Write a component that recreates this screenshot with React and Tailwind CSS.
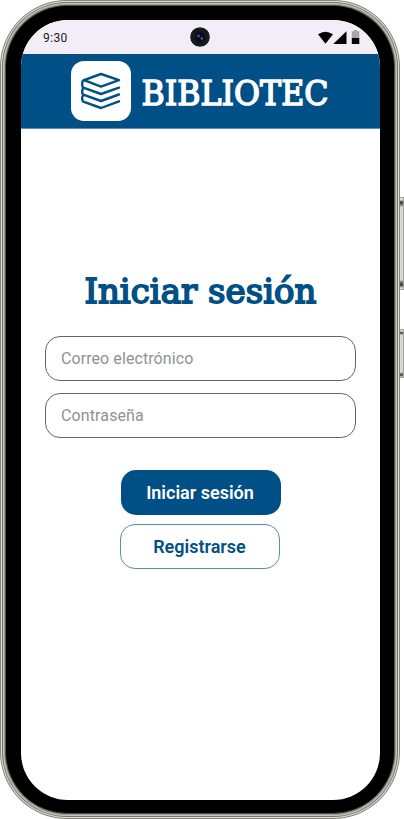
import React from "react";

const slab = "font-['Roboto_Slab','DejaVu_Serif',serif]";

function StatusBar() {
  return (
    <div className="relative flex h-[34px] shrink-0 items-center justify-between bg-[#f3edf7] pl-[22px] pr-[20px] text-[#1d1b20]">
      <span className="mt-px text-[12px] leading-4 tracking-[0.4px]">9:30</span>
      <svg className="absolute left-[169px] top-[7px]" width="20" height="20" viewBox="0 0 20 20">
        <circle cx="10" cy="10" r="9.8" fill="#17181c" />
        <circle cx="10" cy="10" r="5" fill="#080b18" />
        <circle cx="8.5" cy="8.8" r="1.6" fill="#4b4288" />
        <circle cx="11.8" cy="11.5" r="1.2" fill="#426da4" />
      </svg>
      <svg className="mt-px" width="42" height="16" viewBox="0 0 42 16" fill="#000">
        <path d="M0 4.3Q7.5-.8 15 4.3L7.5 13.7Z" />
        <path d="M28.5 1.3V14H15.2Z" />
        <path d="M36 0h3.2v1.2h2.1V8h-7.5V1.2H36Z" fill="#aaa4ad" />
        <path d="M33.8 8h7.5v6h-7.5Z" />
      </svg>
    </div>
  );
}

function Logo() {
  return (
    <div className="flex size-[60px] shrink-0 items-center justify-center rounded-[13px] bg-white">
      <svg width="40" height="38" viewBox="0 0 40 38" fill="none" stroke="#004f86" strokeWidth="2.4" strokeLinecap="round" strokeLinejoin="round">
        <path d="M20 2 38 8.2 20 14.6 3 8.2Z" />
        <path d="M3 8.2Q1.2 9 1.2 11V13.4Q1.2 15 3 15.8L20 22 38 15.7" />
        <path d="M2.6 16.2Q1.2 17 1.2 18.6V20.4Q1.2 22 3 22.8L20 29 38 22.5" />
        <path d="M2.6 23.2Q1.2 24 1.2 25.6V27.4Q1.2 29 3 29.8L20 36 38 29.3" />
      </svg>
    </div>
  );
}

export default function App() {
  return (
    <div className="relative h-[819px] w-[404px] overflow-hidden bg-white font-[Roboto,sans-serif]">
      <div className="absolute left-[399px] top-[197px] h-[93px] w-[5px] border border-[#a3a4a0] bg-[linear-gradient(to_bottom,#ddd_0_2px,#333_4px,#777_7px,#d6d7d2_9px,#d6d7d2_82px,#777_84px,#333_87px,#ddd_90px)]" />
      <div className="absolute left-[399px] top-[329px] h-[49px] w-[5px] border border-[#a3a4a0] bg-[linear-gradient(to_bottom,#ddd_0_1px,#333_3px,#d6d7d2_5px,#d6d7d2_42px,#333_45px,#ddd_47px)]" />
      <div className="relative h-[819px] w-[400px] rounded-[67px] bg-[#85857e] p-px">
        <div className="h-full rounded-[66px] bg-[#deded8] p-px">
          <div className="h-full rounded-[65px] bg-[#777770] p-px">
            <div className="h-full rounded-[64px] bg-[#c5c5bc] p-px">
              <div className="h-full rounded-[63px] bg-[#a09f96] p-px">
                <div className="h-full rounded-[62px] bg-[#50504c] p-px">
                  <div className="h-full rounded-[61px] bg-black pb-[13px] pl-[15px] pr-[14px] pt-[14px]">
                    <main className="flex h-full flex-col overflow-hidden rounded-[47px] bg-white">
                      <StatusBar />
                      <header className="flex h-[75px] shrink-0 items-center gap-[9px] border-b border-[#5c8db0] bg-[#004f86] pl-[50px]">
                        <Logo />
                        <svg className={`overflow-visible ${slab}`} width="191" height="54" viewBox="0 0 191 54">
                          <text x="1.5" y="41.3" fill="white" stroke="white" strokeWidth="1.5" fontSize="34" fontWeight="400" textLength="187" lengthAdjust="spacingAndGlyphs">BIBLIOTEC</text>
                        </svg>
                      </header>
                      <svg className={`ml-[62px] mt-[138px] h-[50px] w-[236px] shrink-0 overflow-visible ${slab}`} viewBox="0 0 236 50">
                        <text x="1.5" y="35.5" fill="#004f86" stroke="#004f86" strokeWidth="1.8" fontSize="34" fontWeight="400" textLength="232" lengthAdjust="spacingAndGlyphs">Iniciar sesión</text>
                      </svg>
                      <form className="mt-[19px] flex flex-col gap-3 pl-[24px]">
                        <div className="flex h-[45px] w-[311px] items-center rounded-[15px] border border-[#646464] pl-[15px] text-[16px] tracking-[0.08px] text-[#8d9296]">Correo electrónico</div>
                        <div className="flex h-[45px] w-[311px] items-center rounded-[15px] border border-[#646464] pl-[15px] text-[16px] tracking-[0.12px] text-[#8d9296]">Contraseña</div>
                        <div className="ml-[75px] mt-[20px] flex w-[161px] flex-col gap-[9px] text-[18px] font-semibold">
                          <button type="button" className="h-[45px] w-[160px] self-end rounded-[15px] bg-[#004f86] pr-[2px] text-white">Iniciar sesión</button>
                          <button type="button" className="h-[45px] w-[160px] rounded-[15px] border border-[#5c8db0] bg-white pr-[1px] text-[#004f86]">Registrarse</button>
                        </div>
                      </form>
                    </main>
                  </div>
                </div>
              </div>
            </div>
          </div>
        </div>
      </div>
    </div>
  );
}
